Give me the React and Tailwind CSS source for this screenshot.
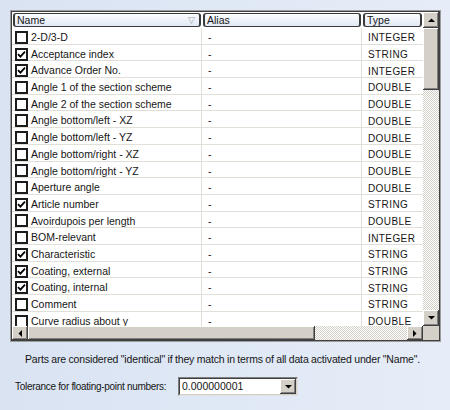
const rows = [
  ["2-D/3-D", false, "INTEGER"],
  ["Acceptance index", true, "STRING"],
  ["Advance Order No.", true, "INTEGER"],
  ["Angle 1 of the section scheme", false, "DOUBLE"],
  ["Angle 2 of the section scheme", false, "DOUBLE"],
  ["Angle bottom/left - XZ", false, "DOUBLE"],
  ["Angle bottom/left - YZ", false, "DOUBLE"],
  ["Angle bottom/right - XZ", false, "DOUBLE"],
  ["Angle bottom/right - YZ", false, "DOUBLE"],
  ["Aperture angle", false, "DOUBLE"],
  ["Article number", true, "STRING"],
  ["Avoirdupois per length", false, "DOUBLE"],
  ["BOM-relevant", false, "INTEGER"],
  ["Characteristic", true, "STRING"],
  ["Coating, external", true, "STRING"],
  ["Coating, internal", true, "STRING"],
  ["Comment", false, "STRING"],
  ["Curve radius about y", false, "DOUBLE"],
];

const bevel =
  "bg-[#d4d0c8] shadow-[inset_-1px_-1px_#404040,inset_1px_1px_#ffffff,inset_-2px_-2px_#808080,inset_2px_2px_#d4d0c8]";
const track =
  "bg-[repeating-conic-gradient(#d4d0c8_0_25%,#ffffff_0_50%)] bg-[length:2px_2px]";

function Arrow({ dir }) {
  const pts = {
    up: "0,4 7,4 3.5,0.5",
    down: "0,0 7,0 3.5,3.5",
    left: "4,0 4,7 0.5,3.5",
    right: "0,0 0,7 3.5,3.5",
  }[dir];
  const vertical = dir === "up" || dir === "down";
  return (
    <svg width={vertical ? 7 : 4} height={vertical ? 4 : 7} viewBox={vertical ? "0 0 7 4" : "0 0 4 7"}>
      <polygon points={pts} fill="#000" />
    </svg>
  );
}

function Checkbox({ checked }) {
  return (
    <div className="w-[13px] h-[13px] border-2 border-[#1c1c1c] bg-white flex items-center justify-center shrink-0">
      {checked && (
        <svg width="9" height="9" viewBox="0 0 9 9">
          <path d="M1 4.2 L3.4 6.6 L8 1.6" stroke="#000" strokeWidth="1.8" fill="none" />
        </svg>
      )}
    </div>
  );
}

function HeaderCell({ label, sort }) {
  return (
    <div className="h-full px-[1px] py-[1px]">
      <div className="h-full rounded-[3px] border border-[#3a3a3a] border-x-2 bg-gradient-to-b from-[#fbfcfe] to-[#e2e9f5] flex items-center justify-between pl-[2px] pr-[4px] pt-[1px]">
        <span className="leading-none">{label}</span>
        {sort && <span className="text-[9px] text-[#9a9a9a] leading-none">▽</span>}
      </div>
    </div>
  );
}

export default function App() {
  return (
    <div
      className="w-[450px] h-[410px] bg-gradient-to-r from-[#d9e3f2] to-[#e6edf8] text-[10.5px] text-[#161616] pt-[10px] pl-[10px]"
      style={{ fontFamily: '"Liberation Sans", Arial, sans-serif' }}
    >
      {/* grid panel */}
      <div className="w-[431px] h-[332px] border border-[#9c9c9c] bg-white">
        <div className="w-full h-full border border-[#404040] grid grid-cols-[1fr_16px] grid-rows-[1fr_14px] overflow-hidden">
          <div className="overflow-hidden flex flex-col">
            <div className="grid grid-cols-[190px_160px_61px] h-[16px] shrink-0">
              <HeaderCell label="Name" sort />
              <HeaderCell label="Alias" />
              <HeaderCell label="Type" />
            </div>
            <div className="flex-1 overflow-hidden">
              {rows.map(([name, checked, type]) => (
                <div
                  key={name}
                  className="grid grid-cols-[190px_160px_61px] h-[16.7px] border-b border-[#e2dfd8]"
                >
                  <div className="flex items-center gap-[3px] pl-[3px] pt-[1px] border-r border-[#e2dfd8]">
                    <Checkbox checked={checked} />
                    <span className="whitespace-nowrap pt-[1px]">{name}</span>
                  </div>
                  <div className="flex items-center pl-[6px] pt-[2px] border-r border-[#e2dfd8]">-</div>
                  <div className="flex items-center pl-[6px] pt-[2px] text-[10px] tracking-[0.4px]">{type}</div>
                </div>
              ))}
            </div>
          </div>

          {/* vertical scrollbar */}
          <div className="flex flex-col">
            <div className={`h-[16px] flex items-center justify-center ${bevel}`}>
              <Arrow dir="up" />
            </div>
            <div className={`h-[62px] ${bevel}`} />
            <div className={`flex-1 ${track}`} />
            <div className={`h-[16px] flex items-center justify-center ${bevel}`}>
              <Arrow dir="down" />
            </div>
          </div>

          {/* horizontal scrollbar */}
          <div className="flex">
            <div className={`w-[16px] flex items-center justify-center ${bevel}`}>
              <Arrow dir="left" />
            </div>
            <div className={`w-[287px] ${bevel}`} />
            <div className={`flex-1 ${track}`} />
            <div className={`w-[16px] flex items-center justify-center ${bevel}`}>
              <Arrow dir="right" />
            </div>
          </div>
          <div className="bg-[#d4d0c8]" />
        </div>
      </div>

      <p className="mt-[10px] pl-[15px] leading-[14px] whitespace-nowrap tracking-[-0.15px] [word-spacing:-0.3px]">
        Parts are considered "identical" if they match in terms of all data activated under "Name".
      </p>

      <div className="mt-[11px] flex items-center">
        <span className="pl-[5px] w-[168px] whitespace-nowrap text-[10px] tracking-[-0.3px]">Tolerance for floating-point numbers:</span>
        <div className="w-[120px] h-[19px] border border-[#808080] border-r-[#e0e0e0] border-b-[#e0e0e0] bg-white flex">
          <div className="flex-1 border border-[#404040] border-r-[#d4d0c8] border-b-[#d4d0c8] flex items-center pl-[2px]">
            0.000000001
            <div className="ml-auto h-full w-[16px] flex items-center justify-center bg-[#d4d0c8] shadow-[inset_-1px_-1px_#404040,inset_1px_1px_#ffffff,inset_-2px_-2px_#808080]">
              <Arrow dir="down" />
            </div>
          </div>
        </div>
      </div>
    </div>
  );
}
